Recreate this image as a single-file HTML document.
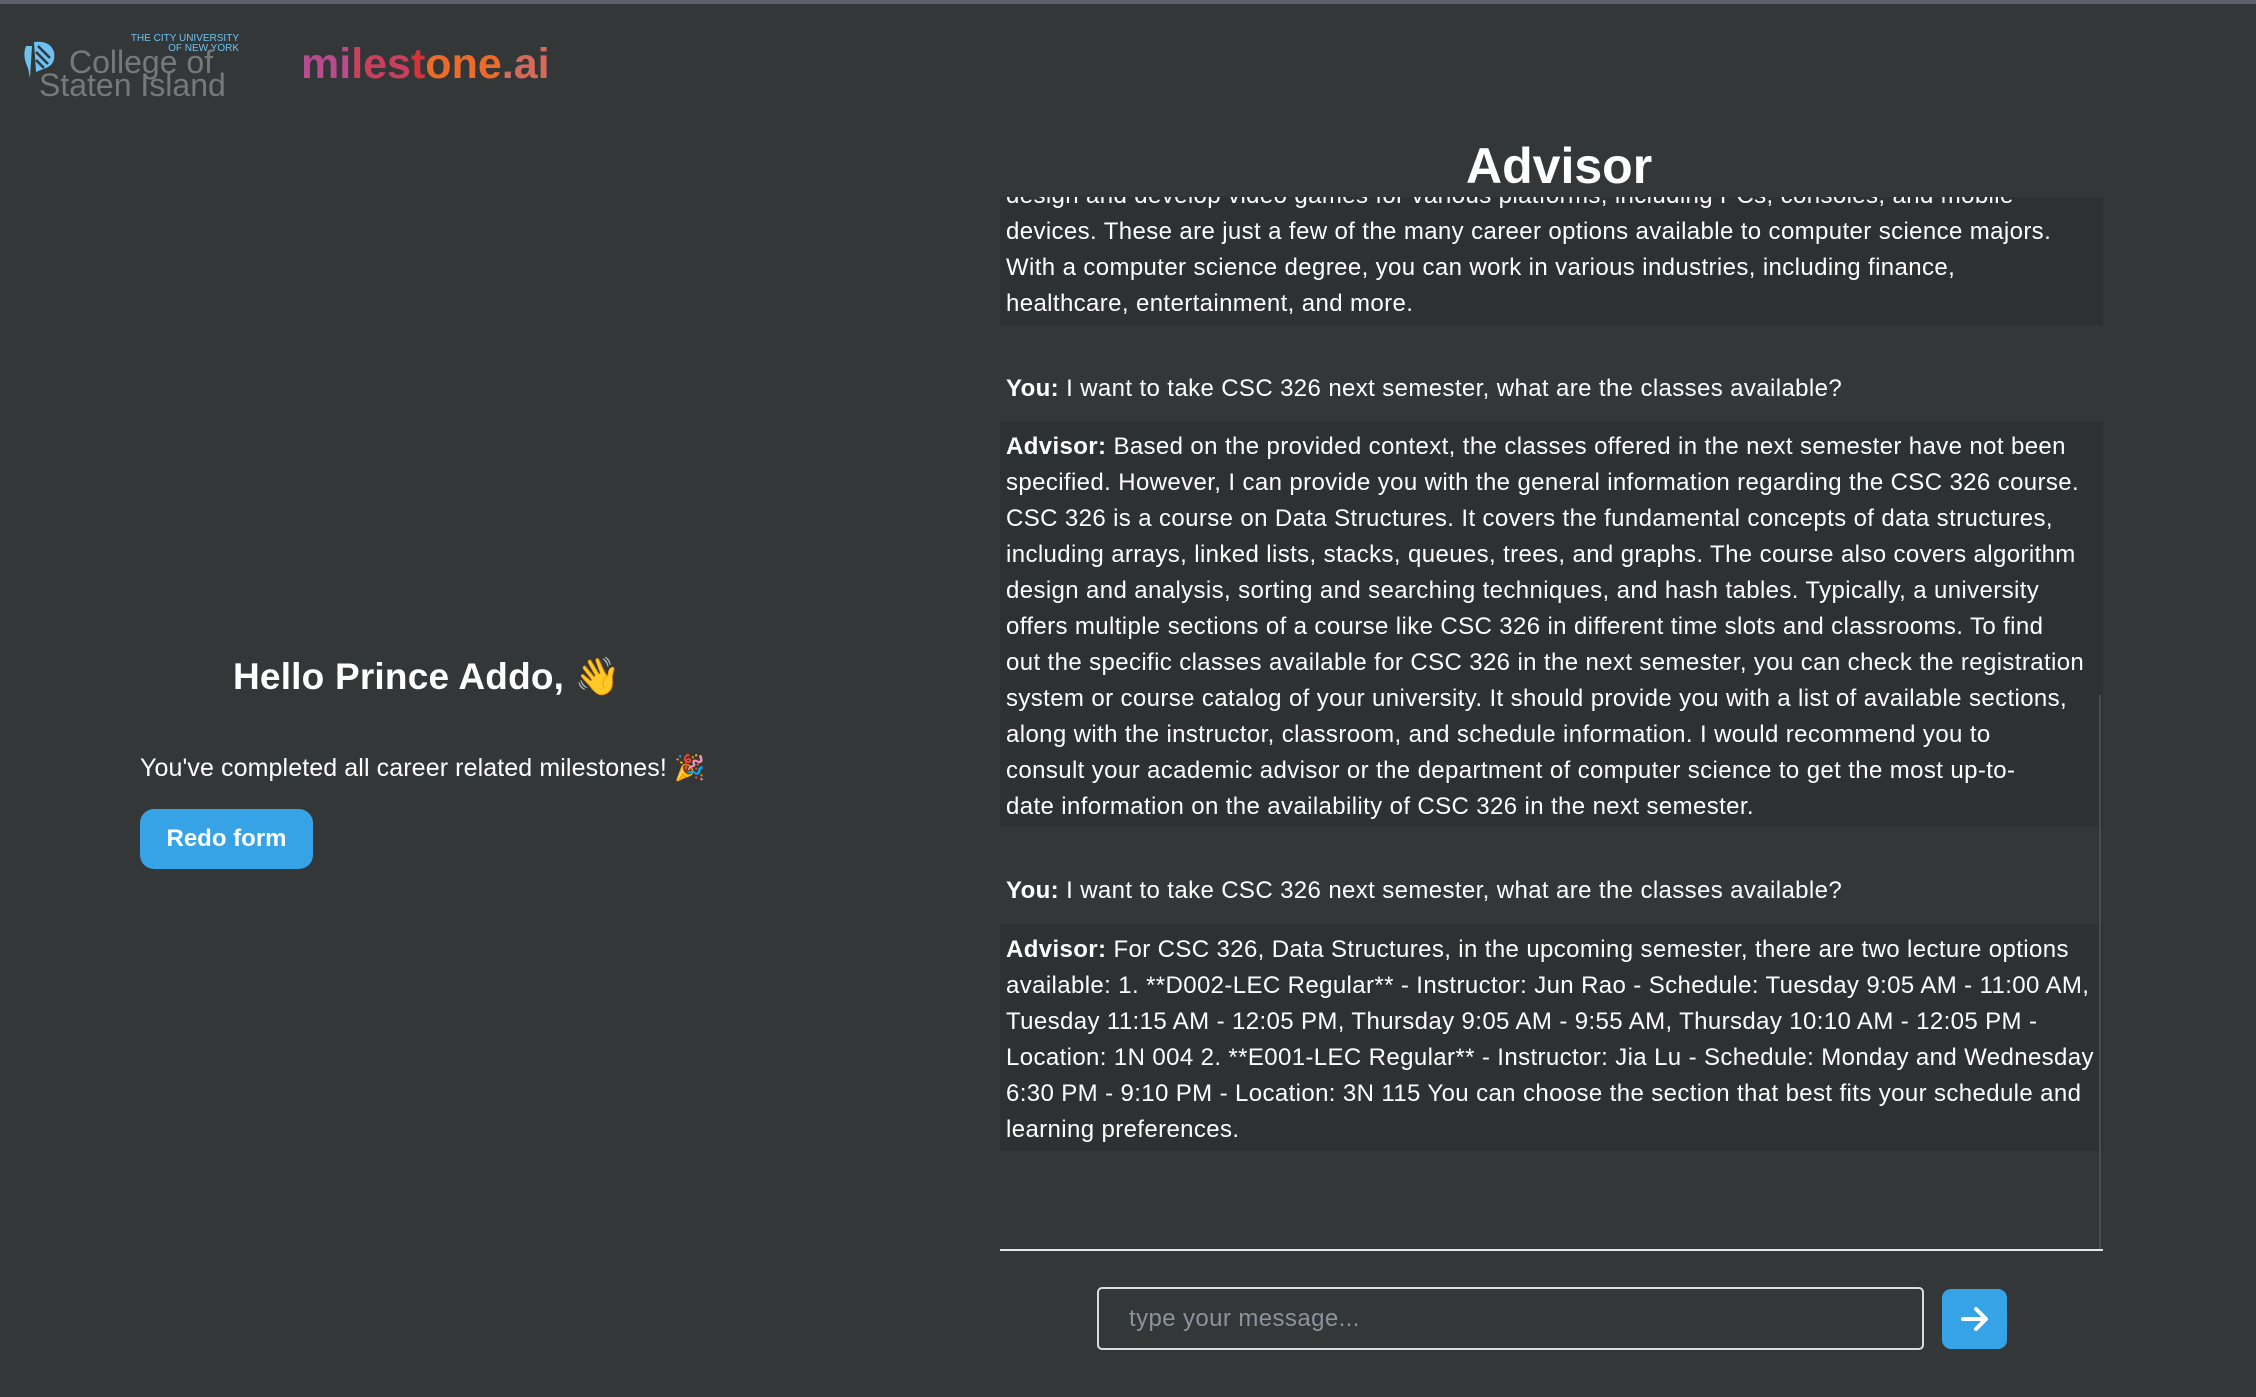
<!DOCTYPE html>
<html><head><meta charset="utf-8"><style>
*{margin:0;padding:0;box-sizing:border-box}
body{width:2256px;height:1397px;background:#343738;position:relative;overflow:hidden;font-family:"Liberation Sans",sans-serif;color:#fff}
.top{position:absolute;left:0;top:0;width:2256px;height:4px;background:#5c606b}
.a{position:absolute;white-space:nowrap}
.chat{position:absolute;left:1000px;top:197px;width:1103px;height:1053px;overflow:hidden}
.box{position:absolute;left:0;width:1103px;background:#2e3132;padding:0 6px;font-size:24px;letter-spacing:0.38px;line-height:36px;white-space:nowrap}
.you{position:absolute;left:6px;font-size:24px;letter-spacing:0.38px;line-height:36px;white-space:nowrap}
b{font-weight:bold}
</style></head><body>
<div class="top"></div>
<svg class="a" style="left:20px;top:38px" width="40" height="45" viewBox="0 0 40 45"><path d="M6 8 Q2 18 8 30 L10 40 L12 8Z M14 4 Q30 2 34 14 Q36 26 26 30 L16 34Z" fill="#6fc1ef"/><path d="M18 8 L30 20 M16 14 L28 26 M16 22 L24 30" stroke="#343738" stroke-width="2.5"/></svg>
<div class="a" style="left:127px;top:34px;font-size:10px;color:#6fc1ef;line-height:10px;text-align:right;width:112px">THE CITY UNIVERSITY<br>OF NEW YORK</div>
<div class="a" style="left:69px;top:49px;font-size:32px;color:#75797c;line-height:26px">College of</div>
<div class="a" style="left:39px;top:72px;font-size:32px;color:#75797c;line-height:26px">Staten Island</div>
<div class="a" style="left:301px;top:38px;font-size:43px;font-weight:bold;line-height:52px"><span style="color:#b94c8e">mi</span><span style="color:#c9405e">les</span><span style="color:#d5323a">t</span><span style="color:#ea6b2a">one</span><span style="color:#d66a5a">.ai</span></div>
<div class="a" style="left:1466px;top:136px;font-size:50px;font-weight:bold;line-height:60px">Advisor</div>
<div class="a" style="left:233px;top:652px;font-size:37px;font-weight:bold;line-height:50px;letter-spacing:0.2px">Hello Prince Addo, 👋</div>
<div class="a" style="left:140px;top:751px;font-size:25px;letter-spacing:0.1px;line-height:34px">You've completed all career related milestones! 🎉</div>
<div class="a" style="left:140px;top:809px;width:173px;height:60px;background:#36a3e6;border-radius:14px;font-size:24px;font-weight:bold;text-align:center;line-height:60px">Redo form</div>
<div class="chat">
<div class="box" style="top:-21px;height:149px;padding-top:2px">design and develop video games for various platforms, including PCs, consoles, and mobile<br>devices. These are just a few of the many career options available to computer science majors.<br>With a computer science degree, you can work in various industries, including finance,<br>healthcare, entertainment, and more.</div>
<div class="you" style="top:174px"><b>You:</b> I want to take CSC 326 next semester, what are the classes available?</div>
<div class="box" style="top:224px;height:406px;padding-top:8px"><b>Advisor:</b> Based on the provided context, the classes offered in the next semester have not been<br>specified. However, I can provide you with the general information regarding the CSC 326 course.<br>CSC 326 is a course on Data Structures. It covers the fundamental concepts of data structures,<br>including arrays, linked lists, stacks, queues, trees, and graphs. The course also covers algorithm<br>design and analysis, sorting and searching techniques, and hash tables. Typically, a university<br>offers multiple sections of a course like CSC 326 in different time slots and classrooms. To find<br>out the specific classes available for CSC 326 in the next semester, you can check the registration<br>system or course catalog of your university. It should provide you with a list of available sections,<br>along with the instructor, classroom, and schedule information. I would recommend you to<br>consult your academic advisor or the department of computer science to get the most up-to-<br>date information on the availability of CSC 326 in the next semester.</div>
<div class="you" style="top:676px"><b>You:</b> I want to take CSC 326 next semester, what are the classes available?</div>
<div class="box" style="top:727px;height:227px;padding-top:8px"><b>Advisor:</b> For CSC 326, Data Structures, in the upcoming semester, there are two lecture options<br>available: 1. **D002-LEC Regular** - Instructor: Jun Rao - Schedule: Tuesday 9:05 AM - 11:00 AM,<br>Tuesday 11:15 AM - 12:05 PM, Thursday 9:05 AM - 9:55 AM, Thursday 10:10 AM - 12:05 PM -<br>Location: 1N 004 2. **E001-LEC Regular** - Instructor: Jia Lu - Schedule: Monday and Wednesday<br>6:30 PM - 9:10 PM - Location: 3N 115 You can choose the section that best fits your schedule and<br>learning preferences.</div>
<div style="position:absolute;left:1099px;top:498px;width:2px;height:555px;background:#4a4d50"></div>
</div>
<div class="a" style="left:1000px;top:1249px;width:1103px;height:2px;background:#e6e6e6"></div>
<div class="a" style="left:1097px;top:1287px;width:827px;height:63px;border:2px solid #dcdcdc;border-radius:5px;font-size:24px;letter-spacing:0.4px;color:#8b939c;line-height:59px;padding-left:30px">type your message...</div>
<div class="a" style="left:1942px;top:1289px;width:65px;height:60px;background:#36a3e6;border-radius:9px"><svg width="65" height="60" viewBox="0 0 65 60"><path d="M21 30H44M34 20L44 30L34 40" stroke="#fff" stroke-width="4" fill="none" stroke-linecap="round" stroke-linejoin="round"/></svg></div>
</body></html>
